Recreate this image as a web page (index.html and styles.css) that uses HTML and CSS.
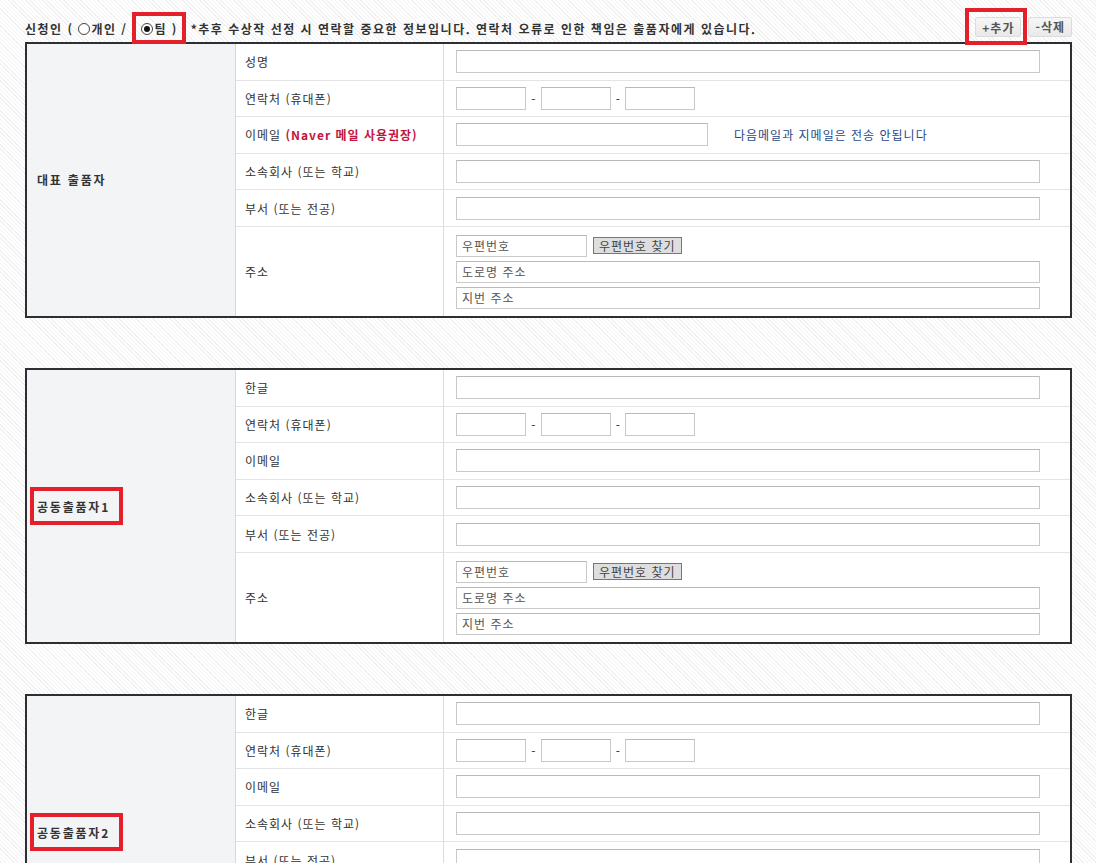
FILE: index.html
```html
<!DOCTYPE html>
<html lang="ko">
<head>
<meta charset="UTF-8">
<title>출품자 정보</title>
<link rel="stylesheet" href="styles.css">
</head>
<body>

<div class="wrap">
  <div class="top">
    <div class="apply">
      신청인 ( <span class="radio"></span>개인 / <span class="mark mark-team"><span class="radio on"></span>팀 )</span>
      *추후 수상작 선정 시 연락할 중요한 정보입니다. 연락처 오류로 인한 책임은 출품자에게 있습니다.
    </div>
    <div class="btns">
      <span class="mark mark-btn"><button class="btn">+추가</button></span>
      <button class="btn">-삭제</button>
    </div>
  </div>

  <!-- 대표 출품자 -->
  <table class="form">
    <colgroup><col class="c1"><col class="c2"><col></colgroup>
    <tr>
      <th rowspan="6"><span class="who">대표 출품자</span></th>
      <td class="lbl">성명</td>
      <td><input class="inp full" type="text"></td>
    </tr>
    <tr>
      <td class="lbl">연락처 (휴대폰)</td>
      <td><input class="inp tel" type="text"><span class="dash">-</span><input class="inp tel" type="text"><span class="dash">-</span><input class="inp tel" type="text"></td>
    </tr>
    <tr>
      <td class="lbl">이메일 <b class="warn">(Naver 메일 사용권장)</b></td>
      <td><input class="inp mail" type="text"><span class="note">다음메일과 지메일은 전송 안됩니다</span></td>
    </tr>
    <tr>
      <td class="lbl">소속회사 (또는 학교)</td>
      <td><input class="inp full" type="text"></td>
    </tr>
    <tr>
      <td class="lbl">부서 (또는 전공)</td>
      <td><input class="inp full" type="text"></td>
    </tr>
    <tr>
      <td class="lbl">주소</td>
      <td class="addr">
        <div><input class="inp zip" type="text" placeholder="우편번호"><button class="find">우편번호 찾기</button></div>
        <input class="inp full" type="text" placeholder="도로명 주소">
        <input class="inp full" type="text" placeholder="지번 주소">
      </td>
    </tr>
  </table>

  <!-- 공동출품자1 -->
  <table class="form">
    <colgroup><col class="c1"><col class="c2"><col></colgroup>
    <tr>
      <th rowspan="6"><span class="who mark mark-who">공동출품자1</span></th>
      <td class="lbl">한글</td>
      <td><input class="inp full" type="text"></td>
    </tr>
    <tr>
      <td class="lbl">연락처 (휴대폰)</td>
      <td><input class="inp tel" type="text"><span class="dash">-</span><input class="inp tel" type="text"><span class="dash">-</span><input class="inp tel" type="text"></td>
    </tr>
    <tr>
      <td class="lbl">이메일</td>
      <td><input class="inp full" type="text"></td>
    </tr>
    <tr>
      <td class="lbl">소속회사 (또는 학교)</td>
      <td><input class="inp full" type="text"></td>
    </tr>
    <tr>
      <td class="lbl">부서 (또는 전공)</td>
      <td><input class="inp full" type="text"></td>
    </tr>
    <tr>
      <td class="lbl">주소</td>
      <td class="addr">
        <div><input class="inp zip" type="text" placeholder="우편번호"><button class="find">우편번호 찾기</button></div>
        <input class="inp full" type="text" placeholder="도로명 주소">
        <input class="inp full" type="text" placeholder="지번 주소">
      </td>
    </tr>
  </table>

  <!-- 공동출품자2 -->
  <table class="form">
    <colgroup><col class="c1"><col class="c2"><col></colgroup>
    <tr>
      <th rowspan="6"><span class="who mark mark-who">공동출품자2</span></th>
      <td class="lbl">한글</td>
      <td><input class="inp full" type="text"></td>
    </tr>
    <tr>
      <td class="lbl">연락처 (휴대폰)</td>
      <td><input class="inp tel" type="text"><span class="dash">-</span><input class="inp tel" type="text"><span class="dash">-</span><input class="inp tel" type="text"></td>
    </tr>
    <tr>
      <td class="lbl">이메일</td>
      <td><input class="inp full" type="text"></td>
    </tr>
    <tr>
      <td class="lbl">소속회사 (또는 학교)</td>
      <td><input class="inp full" type="text"></td>
    </tr>
    <tr>
      <td class="lbl">부서 (또는 전공)</td>
      <td><input class="inp full" type="text"></td>
    </tr>
    <tr>
      <td class="lbl">주소</td>
      <td class="addr">
        <div><input class="inp zip" type="text" placeholder="우편번호"><button class="find">우편번호 찾기</button></div>
        <input class="inp full" type="text" placeholder="도로명 주소">
        <input class="inp full" type="text" placeholder="지번 주소">
      </td>
    </tr>
  </table>
</div>

</body>
</html>
```

FILE: styles.css
```css
body {
  margin: 0;
  padding: 0;
  background-color: #fff;
  background-image: repeating-linear-gradient(45deg, #fff 0px, #fff 2px, #f1f1f1 2px, #f1f1f1 3px);
  font-family: "Noto Sans CJK KR", sans-serif;
  font-size: 12px;
  letter-spacing: 1px;
  color: #333;
}

.wrap {
  width: 1047px;
  padding: 0 0 40px 25px;
}

.top {
  display: flex;
  justify-content: space-between;
  align-items: center;
  height: 42px;
  padding-top: 12px;
  box-sizing: border-box;
}

.apply {
  font-weight: bold;
  font-size: 12px;
  letter-spacing: 1.5px;
  color: #333;
  margin-top: 2px;
}

.radio {
  display: inline-block;
  width: 10px;
  height: 10px;
  border: 1px solid #444;
  border-radius: 50%;
  vertical-align: -1px;
  margin-right: 1px;
  position: relative;
  background: #fff;
}

.radio.on::after {
  content: "";
  position: absolute;
  left: 2px;
  top: 2px;
  width: 6px;
  height: 6px;
  border-radius: 50%;
  background: #111;
}

.mark {
  display: inline-block;
  border: 4px solid #e4202b;
}

.mark-team {
  padding: 4px 4px 3px 5px;
  margin: -8px 0;
}

.btns {
  display: flex;
  align-items: center;
  gap: 1px;
  align-self: flex-start;
  margin-top: -4px;
}

.mark-btn {
  padding: 5px 2px 4px 6px;
}

.btn {
  height: 20px;
  padding: 0 6px;
  border: 1px solid #dcdcdc;
  border-radius: 2px;
  background: linear-gradient(#f6f6f6, #e9e9e9);
  font-family: inherit;
  font-size: 12px;
  font-weight: bold;
  letter-spacing: 1px;
  color: #555;
  cursor: pointer;
}

.form {
  width: 1047px;
  border-collapse: separate;
  border-spacing: 0;
  border: 2px solid #2e2f33;
  background: #fff;
  margin-bottom: 50px;
}

.form col.c1 {
  width: 209px;
}

.form col.c2 {
  width: 208px;
}

.form th {
  background: #f3f4f6;
  text-align: left;
  padding: 0 0 0 10px;
  border-right: 1px solid #d8d8d8;
  font-weight: bold;
  color: #333;
}

.who {
  letter-spacing: 1.8px;
}

.mark-who {
  padding: 7px 9px 6px 3px;
  margin-left: -7px;
}

.form td {
  height: 36.6px;
  padding: 0 12px;
  border-bottom: 1px solid #e4e4e4;
  box-sizing: border-box;
}

.form tr:last-child td {
  border-bottom: none;
}

.form td.lbl {
  padding-left: 9px;
  border-right: 1px solid #dcdcdc;
  color: #333;
}

.warn {
  color: #c1163f;
}

.inp {
  height: 23px;
  box-sizing: border-box;
  border: 1px solid #c9c9c9;
  border-top-color: #b9b9b9;
  padding: 0 5px;
  font-family: inherit;
  font-size: 12px;
  letter-spacing: 1px;
  color: #555;
  background: #fff;
  vertical-align: middle;
}

.inp::placeholder {
  color: #555;
}

.inp.full {
  width: 584px;
  display: block;
}

.inp.tel {
  width: 70px;
}

.inp.mail {
  width: 252px;
}

.inp.zip {
  width: 131px;
  height: 22px;
}

.dash {
  display: inline-block;
  width: 14.5px;
  text-align: center;
  letter-spacing: 0;
  vertical-align: middle;
}

.note {
  margin-left: 26px;
  color: #1e4a87;
  vertical-align: middle;
}

.form td.addr {
  height: 89px;
  padding-top: 8px;
  padding-bottom: 7px;
}

.addr .inp.full {
  margin-top: 4px;
  height: 22px;
}

.find {
  height: 17px;
  margin-left: 6px;
  padding: 0 5px;
  border: 1px solid #777;
  background: #dedede;
  font-family: inherit;
  font-size: 12px;
  letter-spacing: 1px;
  line-height: 14px;
  color: #444;
  vertical-align: middle;
}
```
